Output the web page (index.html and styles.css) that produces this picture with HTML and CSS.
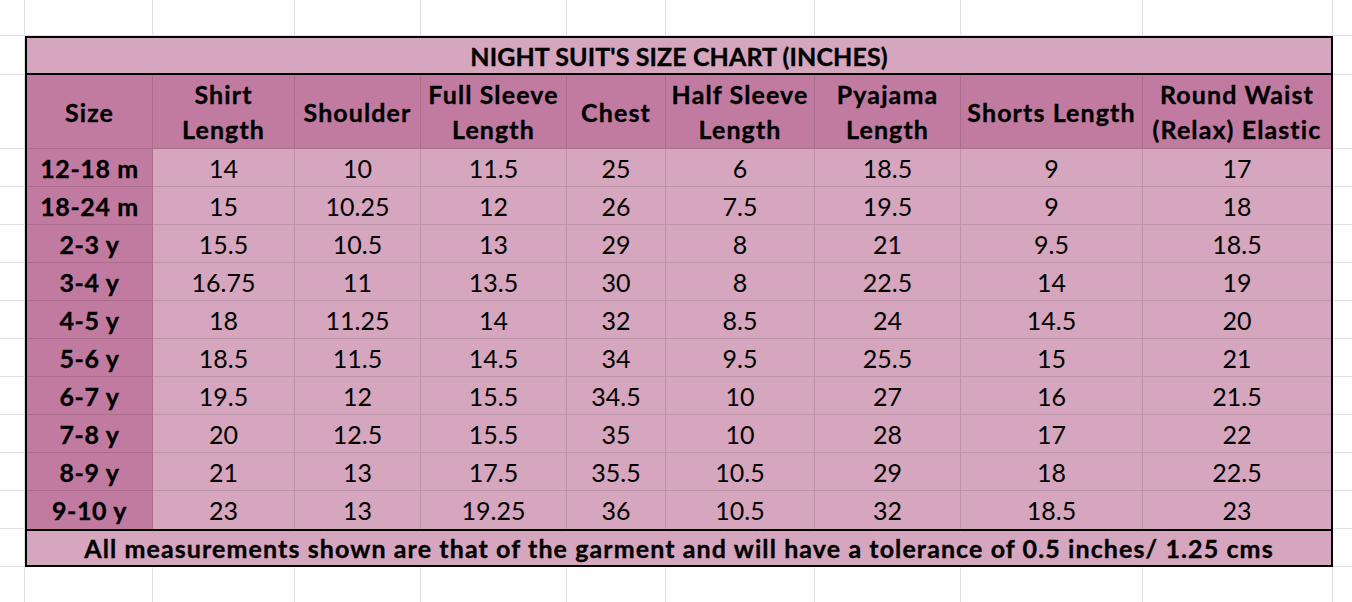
FILE: index.html
```html
<!DOCTYPE html>
<html lang="en">
<head>
<meta charset="utf-8">
<title>Night Suit's Size Chart</title>
<link rel="stylesheet" href="styles.css">
</head>
<body>
<div class="sheet">
  <div class="chart">
    <div class="title">NIGHT SUIT'S SIZE CHART (INCHES)</div>
    <div class="row head">
      <div class="c">Size</div>
      <div class="c">Shirt<br>Length</div>
      <div class="c">Shoulder</div>
      <div class="c">Full Sleeve<br>Length</div>
      <div class="c">Chest</div>
      <div class="c">Half Sleeve<br>Length</div>
      <div class="c">Pyajama<br>Length</div>
      <div class="c">Shorts Length</div>
      <div class="c">Round Waist<br>(Relax) Elastic</div>
    </div>
    <div class="row"><div class="c s">12-18 m</div><div class="c">14</div><div class="c">10</div><div class="c">11.5</div><div class="c">25</div><div class="c">6</div><div class="c">18.5</div><div class="c">9</div><div class="c">17</div></div>
    <div class="row"><div class="c s">18-24 m</div><div class="c">15</div><div class="c">10.25</div><div class="c">12</div><div class="c">26</div><div class="c">7.5</div><div class="c">19.5</div><div class="c">9</div><div class="c">18</div></div>
    <div class="row"><div class="c s">2-3 y</div><div class="c">15.5</div><div class="c">10.5</div><div class="c">13</div><div class="c">29</div><div class="c">8</div><div class="c">21</div><div class="c">9.5</div><div class="c">18.5</div></div>
    <div class="row"><div class="c s">3-4 y</div><div class="c">16.75</div><div class="c">11</div><div class="c">13.5</div><div class="c">30</div><div class="c">8</div><div class="c">22.5</div><div class="c">14</div><div class="c">19</div></div>
    <div class="row"><div class="c s">4-5 y</div><div class="c">18</div><div class="c">11.25</div><div class="c">14</div><div class="c">32</div><div class="c">8.5</div><div class="c">24</div><div class="c">14.5</div><div class="c">20</div></div>
    <div class="row"><div class="c s">5-6 y</div><div class="c">18.5</div><div class="c">11.5</div><div class="c">14.5</div><div class="c">34</div><div class="c">9.5</div><div class="c">25.5</div><div class="c">15</div><div class="c">21</div></div>
    <div class="row"><div class="c s">6-7 y</div><div class="c">19.5</div><div class="c">12</div><div class="c">15.5</div><div class="c">34.5</div><div class="c">10</div><div class="c">27</div><div class="c">16</div><div class="c">21.5</div></div>
    <div class="row"><div class="c s">7-8 y</div><div class="c">20</div><div class="c">12.5</div><div class="c">15.5</div><div class="c">35</div><div class="c">10</div><div class="c">28</div><div class="c">17</div><div class="c">22</div></div>
    <div class="row"><div class="c s">8-9 y</div><div class="c">21</div><div class="c">13</div><div class="c">17.5</div><div class="c">35.5</div><div class="c">10.5</div><div class="c">29</div><div class="c">18</div><div class="c">22.5</div></div>
    <div class="row last"><div class="c s">9-10 y</div><div class="c">23</div><div class="c">13</div><div class="c">19.25</div><div class="c">36</div><div class="c">10.5</div><div class="c">32</div><div class="c">18.5</div><div class="c">23</div></div>
    <div class="foot">All measurements shown are that of the garment and will have a tolerance of 0.5 inches/ 1.25 cms</div>
  </div>

  <div class="g"></div><div class="g"></div><div class="g"></div><div class="g"></div><div class="g"></div><div class="g"></div><div class="g"></div><div class="g"></div><div class="g"></div><div class="g"></div><div class="g ge"></div>

  <div class="g"></div><div class="g ge"></div>
  <div class="g"></div><div class="g ge"></div>
  <div class="g"></div><div class="g ge"></div>
  <div class="g"></div><div class="g ge"></div>
  <div class="g"></div><div class="g ge"></div>
  <div class="g"></div><div class="g ge"></div>
  <div class="g"></div><div class="g ge"></div>
  <div class="g"></div><div class="g ge"></div>
  <div class="g"></div><div class="g ge"></div>
  <div class="g"></div><div class="g ge"></div>
  <div class="g"></div><div class="g ge"></div>
  <div class="g"></div><div class="g ge"></div>
  <div class="g"></div><div class="g ge"></div>

  <div class="g gb"></div><div class="g gb"></div><div class="g gb"></div><div class="g gb"></div><div class="g gb"></div><div class="g gb"></div><div class="g gb"></div><div class="g gb"></div><div class="g gb"></div><div class="g gb"></div><div class="g gb ge"></div>
</div>
</body>
</html>
```

FILE: styles.css
```css
* { box-sizing: border-box; }

html, body {
  margin: 0;
  padding: 0;
  background: #ffffff;
  overflow: hidden;
}

body {
  font-family: "Lato", "Open Sans", sans-serif;
  color: #000;
}

.sheet {
  width: 1352px;
  height: 602px;
  display: grid;
  grid-template-columns: 25px 128px 142px 126px 146px 99px 149px 146px 182px 190px 19px;
  grid-template-rows: 36px 39px 74px repeat(10, 38px) 38px 35px;
}

.g {
  border-right: 1px solid #e1e1e1;
  border-bottom: 1px solid #e1e1e1;
}
.g.ge { border-right: none; }
.g.gb { border-bottom: none; }

.chart {
  grid-column: 2 / 11;
  grid-row: 2 / 15;
  border: 2px solid #000;
  display: grid;
  grid-template-columns: 126px 142px 126px 146px 99px 149px 146px 182px 188px;
  grid-template-rows: 37px 74px repeat(10, 38px) 36px;
  background: #d5a6bd;
}

.title {
  grid-column: 1 / -1;
  background: #d5a6bd;
  border-bottom: 2px solid #000;
  display: flex;
  align-items: center;
  justify-content: center;
  font-weight: 700;
  font-size: 25px;
  letter-spacing: 0.1px;
  padding-top: 1px;
  -webkit-text-stroke: 0.35px #000;
}

.row { display: contents; }

.c {
  display: flex;
  align-items: center;
  justify-content: center;
  text-align: center;
  font-size: 25px;
  line-height: 35px;
  background: #d5a6bd;
  border-right: 1px solid #bd93a8;
  border-bottom: 1px solid #bd93a8;
  padding-top: 1px;
}

.row .c:last-child { border-right: none; }
.row.last .c { border-bottom: none; }

.head .c {
  background: #c27ba0;
  font-weight: 700;
  border-color: #ab6d8d;
  letter-spacing: 1.1px;
  -webkit-text-stroke: 0.35px #000;
}

.c.s {
  background: #c27ba0;
  font-weight: 700;
  border-color: #ab6d8d;
  letter-spacing: 0.6px;
  -webkit-text-stroke: 0.35px #000;
}

.foot {
  grid-column: 1 / -1;
  background: #d5a6bd;
  border-top: 2px solid #000;
  display: flex;
  align-items: center;
  justify-content: center;
  font-weight: 700;
  font-size: 25px;
  letter-spacing: 1.1px;
  -webkit-text-stroke: 0.35px #000;
}
```
